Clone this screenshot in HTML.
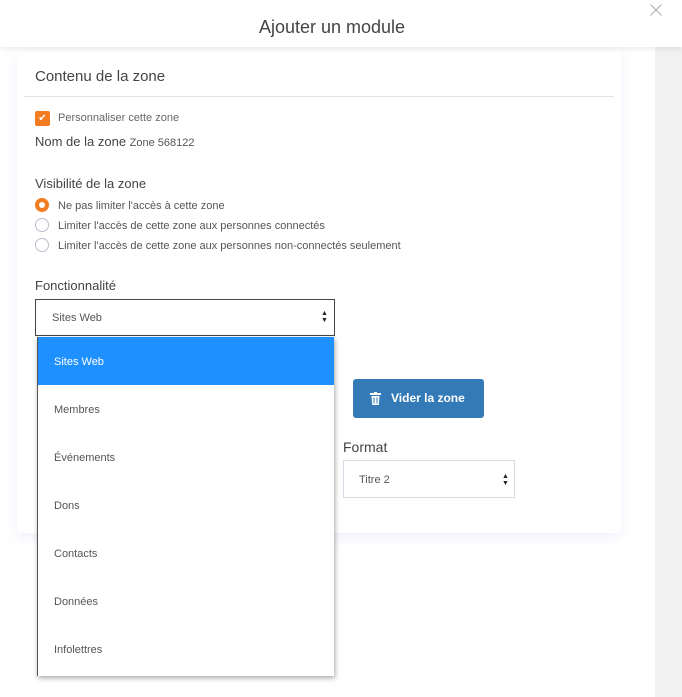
<!DOCTYPE html>
<html><head><meta charset="utf-8"><style>
*{margin:0;padding:0;box-sizing:border-box}
body{width:682px;height:697px;position:relative;background:#fff;font-family:"Liberation Sans",sans-serif;color:#555;overflow:hidden}
.a{position:absolute}
.hdr{left:0;top:0;width:682px;height:47px;background:#fff;box-shadow:0 2px 6px rgba(0,0,0,.08);z-index:2}
.side{left:655px;top:47px;width:27px;height:650px;background:#f1f1f1}
.card{left:17px;top:50px;width:604px;height:483px;background:#fff;border-radius:4px;box-shadow:0 4px 14px rgba(120,150,220,.12)}
.t{white-space:nowrap}
.sel{border:1px solid #d5dbe4;background:#fff}
.radio{width:14px;height:14px;border-radius:50%;border:1px solid #b8c0cc;background:#fff}
.dd{left:37px;top:337px;width:297px;height:339px;background:#fff;box-shadow:1px 2px 5px rgba(0,0,0,.35);border-left:1px solid #555;z-index:5}
.it{height:48px;line-height:50px;padding-left:16px;font-size:11px;color:#555}
</style></head><body>
<div class="a hdr"><div class="a t" style="left:0;width:664px;text-align:center;top:17px;font-size:18px;color:#444">Ajouter un module</div>
<svg class="a" style="left:650px;top:4px" width="12" height="12" viewBox="0 0 12 12"><path d="M0.5 0.5L11.5 11.5M11.5 0.5L0.5 11.5" stroke="#aaa" stroke-width="1"/></svg></div>
<div class="a side"></div>
<div class="a card"></div>
<div class="a t" style="left:35px;top:68px;font-size:15px;color:#444">Contenu de la zone</div>
<div class="a" style="left:24px;top:96px;width:590px;height:1px;background:#e2e2e2"></div>
<div class="a" style="left:35px;top:111px;width:15px;height:15px;background:#f47c20;border-radius:2px;color:#fff;font-size:10px;text-align:center;line-height:15px">✔</div>
<div class="a t" style="left:58px;top:112px;font-size:11px;color:#666">Personnaliser cette zone</div>
<div class="a t" style="left:35px;top:134px;font-size:13px;color:#444">Nom de la zone <span style="font-size:11px;color:#555">Zone 568122</span></div>
<div class="a t" style="left:35px;top:176px;font-size:13px;color:#444">Visibilité de la zone</div>
<div class="a radio" style="left:35px;top:198px;border:4px solid #f47c20"></div>
<div class="a t" style="left:58px;top:200px;font-size:11px;color:#555">Ne pas limiter l'accès à cette zone</div>
<div class="a radio" style="left:35px;top:218px"></div>
<div class="a t" style="left:58px;top:220px;font-size:11px;color:#555">Limiter l'accès de cette zone aux personnes connectés</div>
<div class="a radio" style="left:35px;top:238px"></div>
<div class="a t" style="left:58px;top:240px;font-size:11px;color:#555">Limiter l'accès de cette zone aux personnes non-connectés seulement</div>
<div class="a t" style="left:35px;top:278px;font-size:13px;color:#444">Fonctionnalité</div>
<div class="a" style="left:35px;top:299px;width:300px;height:37px;border:1px solid #444;background:#fff"><div class="a t" style="left:16px;top:12px;font-size:11px;color:#555">Sites Web</div><div class="a" style="left:285px;top:10px;font-size:7px;line-height:7px;color:#222">▲<br>▼</div></div>
<div class="a" style="left:353px;top:379px;width:131px;height:39px;background:#337ab7;border-radius:3px;color:#fff;font-size:12px;font-weight:bold">
<svg class="a" style="left:17px;top:13px" width="11" height="13" viewBox="0 0 11 13"><rect x="0" y="1" width="11" height="2" fill="#fff"/><rect x="4" y="0" width="3" height="2" fill="#fff"/><path d="M1.5 4h8l-.7 9H2.2z" fill="#fff"/><path d="M4 5.5v6M7 5.5v6" stroke="#337ab7" stroke-width="1"/></svg>
<div class="a t" style="left:38px;top:12px">Vider la zone</div></div>
<div class="a t" style="left:343px;top:439px;font-size:14px;color:#444">Format</div>
<div class="a sel" style="left:343px;top:460px;width:172px;height:38px"><div class="a t" style="left:15px;top:13px;font-size:11px;color:#555">Titre 2</div><div class="a" style="left:158px;top:12px;font-size:7px;line-height:7px;color:#222">▲<br>▼</div></div>
<div class="a dd">
<div class="it" style="background:#1e90ff;color:#fff">Sites Web</div>
<div class="it">Membres</div><div class="it">Événements</div><div class="it">Dons</div><div class="it">Contacts</div><div class="it">Données</div><div class="it">Infolettres</div>
</div>
</body></html>
